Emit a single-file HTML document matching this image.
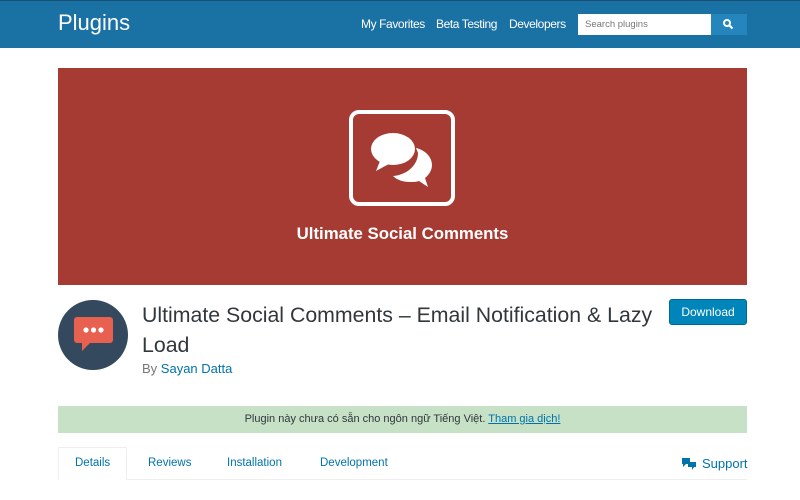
<!DOCTYPE html>
<html><head><meta charset="utf-8"><style>
*{margin:0;padding:0;box-sizing:border-box}
body{width:800px;height:500px;overflow:hidden;background:#fff;font-family:"Liberation Sans","Noto Sans CJK SC",sans-serif;position:relative;color:#32373c}
.hdr{position:absolute;left:0;top:0;width:800px;height:48px;background:#1a71a4;border-top:1px solid #1b4e73}
.abs{position:absolute}
a{color:#0073aa;text-decoration:none}
.nav{font-size:12px;letter-spacing:-0.4px;color:#fff;top:17px}
</style></head><body>
<div class="hdr"></div>
<div class="abs" style="left:58px;top:10px;font-size:22px;color:#fff">Plugins</div>
<div class="abs nav" style="left:361px">My Favorites</div>
<div class="abs nav" style="left:436px">Beta Testing</div>
<div class="abs nav" style="left:509px">Developers</div>
<div class="abs" style="left:578px;top:14px;width:133px;height:21px;background:#fff;font-size:9.5px;color:#777;padding:5px 7px">Search plugins</div>
<div class="abs" style="left:711px;top:14px;width:36px;height:21px;background:#2585bd"></div>
<svg class="abs" style="left:722px;top:18px" width="12" height="12" viewBox="0 0 12 12"><circle cx="5" cy="5" r="3" fill="none" stroke="#fff" stroke-width="2"/><path d="M7 7l3.5 3.5" stroke="#fff" stroke-width="2.2"/></svg>
<div class="abs" style="left:58px;top:68px;width:689px;height:217px;background:#a63b34"></div>
<div class="abs" style="left:349px;top:110px;width:106px;height:96px;border:4px solid #fff;border-radius:10px"></div>
<svg class="abs" style="left:368px;top:128px" width="70" height="62" viewBox="0 0 70 62">
<path d="M48 20c9 2 16 9 16 17 0 5-3 10-7 13l3 9-9-6c-3 1-6 1-9 1-7 0-13-2-17-6 14-1 25-11 25-23z" fill="#fff"/>
<ellipse cx="25" cy="21" rx="22" ry="16" fill="#fff"/>
<path d="M12 33l-4 10 13-7z" fill="#fff"/>
</svg>
<div class="abs" style="left:58px;top:224px;width:689px;text-align:center;font-size:16.8px;font-weight:bold;color:#fff">Ultimate Social Comments</div>
<div class="abs" style="left:58px;top:300px;width:70px;height:70px;border-radius:50%;background:#34495e"></div>
<svg class="abs" style="left:73px;top:315px" width="42" height="40" viewBox="0 0 42 40"><rect x="1" y="2" width="39" height="26" rx="3" fill="#e8604f"/><path d="M9 26v10l9-9z" fill="#e8604f"/><circle cx="13" cy="15" r="2.6" fill="#fff"/><circle cx="20.5" cy="15" r="2.6" fill="#fff"/><circle cx="28" cy="15" r="2.6" fill="#fff"/></svg>
<div class="abs" style="left:142px;top:300px;width:525px;font-size:21.3px;line-height:30px;color:#32373c">Ultimate Social Comments – Email Notification &amp; Lazy Load</div>
<div class="abs" style="left:142px;top:361px;font-size:13px;color:#777">By <a>Sayan Datta</a></div>
<div class="abs" style="left:669px;top:299px;width:78px;height:26px;background:#0085ba;border:1px solid #006799;border-radius:3px;color:#fff;font-size:12px;text-align:center;line-height:24px">Download</div>
<div class="abs" style="left:58px;top:406px;width:689px;height:27px;background:#c6e1c6;text-align:center;font-size:11px;line-height:27px;color:#32373c">Plugin này chưa có sẵn cho ngôn ngữ Tiếng Việt. <a style="text-decoration:underline">Tham gia dịch!</a></div>
<div class="abs" style="left:58px;top:479px;width:689px;height:1px;background:#eee"></div>
<div class="abs" style="left:58px;top:447px;width:69px;height:33px;border:1px solid #eee;border-bottom:1px solid #fff;background:#fff"></div>
<div class="abs" style="top:457px;left:75px;font-size:11.5px;color:#0073aa">Details</div>
<div class="abs" style="top:457px;left:148px;font-size:11.5px;color:#0073aa">Reviews</div>
<div class="abs" style="top:457px;left:227px;font-size:11.5px;color:#0073aa">Installation</div>
<div class="abs" style="top:457px;left:320px;font-size:11.5px;color:#0073aa">Development</div>
<svg class="abs" style="left:682px;top:458px" width="15" height="12" viewBox="0 0 15 12"><rect x="0" y="0" width="8" height="6" fill="#0073aa"/><path d="M1 6v3l3-3z" fill="#0073aa"/><rect x="6" y="4" width="8" height="5" fill="#0073aa"/><path d="M10 9v3l2-3z" fill="#0073aa"/></svg>
<div class="abs" style="left:702px;top:456px;font-size:13px;color:#0073aa">Support</div>
</body></html>
